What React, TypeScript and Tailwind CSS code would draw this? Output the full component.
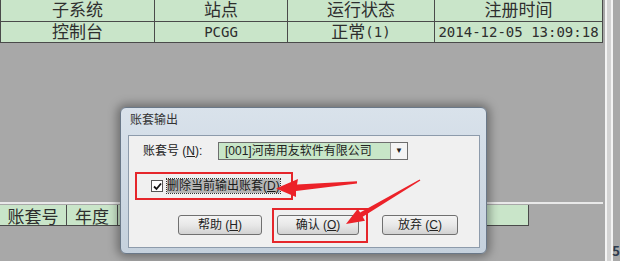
import React from 'react';

const headers = ['子系统', '站点', '运行状态', '注册时间'];

function Cell({ children, h }: { children: React.ReactNode; h: string }) {
  return (
    <div className={`${h} flex items-center justify-center border-b border-r border-[#4a4a4a]`}>
      {children}
    </div>
  );
}

function TopTable() {
  return (
    <div className="grid grid-cols-[154px_133px_147px_168px] border-l border-[#4a4a4a] bg-[#c9e5c9] text-[17px] leading-none text-[#2e2e2e] font-['DejaVu_Sans_Mono','Noto_Sans_CJK_SC',monospace]">
      {headers.map(t => (
        <Cell key={t} h="h-[22px]">{t}</Cell>
      ))}
      <Cell h="h-[21px]">控制台</Cell>
      <Cell h="h-[21px]"><span className="text-[14px]">PCGG</span></Cell>
      <Cell h="h-[21px]">正常<span className="text-[14px]">(1)</span></Cell>
      <Cell h="h-[21px]"><span className="text-[14px]">2014-12-05 13:09:18</span></Cell>
    </div>
  );
}

function Button({ label, hot, className }: { label: string; hot: string; className: string }) {
  return (
    <div
      className={`${className} flex h-[20px] items-center justify-center rounded-[3px] border border-[#707070] bg-gradient-to-b from-[#f4f4f4] via-[#e8e8e8] to-[#d2d2d2] text-[12px] text-[#222]`}
    >
      {label} (<span className="underline">{hot}</span>)
    </div>
  );
}

function Dialog() {
  return (
    <div className="absolute left-[120px] top-[107px] flex h-[147px] w-[367px] flex-col rounded-[6px] border border-[#6a7888] bg-gradient-to-b from-[#d9e2eb] to-[#c5d1dd] shadow-[0_0_10px_3px_rgba(0,0,0,0.35)] font-['Liberation_Sans','Noto_Sans_CJK_SC',sans-serif]">
      <div className="h-[27px] pl-[9px] pt-[4px] text-[12px] leading-[16px] text-[#333]">账套输出</div>
      <div className="mb-[5px] ml-[7px] mr-[6px] flex flex-1 flex-col border border-[#8d9bab] bg-[#f0f0f0] text-[12px] leading-none text-[#222]">
        <div className="mt-[6px] flex h-[18px] items-center pl-[14px]">
          <span className="w-[75px]">
            账套号 (<span className="underline">N</span>):
          </span>
          <div className="flex h-[18px] w-[190px] border border-[#6e6e6e]">
            <div className="flex flex-1 items-center bg-[#c8e6c8] pl-[6px]">[001]河南用友软件有限公司</div>
            <div className="flex w-[17px] items-center justify-center border-l border-[#9a9a9a] bg-[#f4f4f4] text-[8px]">▼</div>
          </div>
        </div>

        <div className="ml-[6px] mt-[12px] flex h-[28px] w-[158px] items-center border-2 border-[#e5262b] pl-[14px]">
          <div className="flex h-[12px] w-[12px] items-center justify-center border border-[#555] bg-white">
            <svg width="9" height="9" viewBox="0 0 9 9">
              <path d="M1 4.5 L3.5 7 L8 1.5" fill="none" stroke="#111" strokeWidth="1.8" />
            </svg>
          </div>
          <span className="ml-[4px] bg-[#b5b5b5] py-[1px] text-[#1a1a1a] outline-1 outline-dotted outline-[#333]">
            删除当前输出账套(<span className="underline">D</span>)
          </span>
        </div>

        <div className="mt-[8px] flex h-[35px] items-start">
          <Button label="帮助" hot="H" className="ml-[49px] mt-[7px] w-[84px]" />
          <div className="ml-[10px] h-[35px] w-[96px] border-2 border-[#e5262b] pl-[3px] pt-[5px]">
            <Button label="确认" hot="O" className="w-[82px] border-[#4d4d4d]" />
          </div>
          <Button label="放弃" hot="C" className="ml-[14px] mt-[7px] w-[76px]" />
        </div>
      </div>
    </div>
  );
}

function Arrows() {
  return (
    <svg className="pointer-events-none absolute left-0 top-0" width="620" height="261" viewBox="0 0 620 261">
      <path d="M357 181.2 L297 184.6 L298 179 L276 188.5 L296 197 L296 191 L357 183.4 Z" fill="#ec2229" />
      <path d="M419.6 179.4 L360.1 212.6 L357.8 208.7 L346 224 L365 220.7 L362.7 216.8 L420.4 180.6 Z" fill="#ec2229" />
    </svg>
  );
}

export default function App() {
  return (
    <div className="relative flex h-[261px] w-[620px] overflow-hidden bg-[#a8a8a8] font-['Noto_Sans_CJK_SC',sans-serif]">
      <div className="flex w-[603px] flex-col">
        <TopTable />
        <div className="h-[159px]" />
        <div className="h-[2px] bg-[#e9e9e9]" />
        <div className="mt-[1px] flex h-[21px] text-[17px] leading-none text-[#2e2e2e]">
          <div className="flex w-[67px] items-center justify-center border-b border-r border-[#4a4a4a] bg-[#c9e5c9]">账套号</div>
          <div className="flex w-[51px] items-center justify-center border-b border-r border-[#4a4a4a] bg-[#c9e5c9]">年度</div>
          <div className="w-[411px] border-b border-r border-[#4a4a4a] bg-[#c9e5c9]" />
        </div>
      </div>
      <div className="ml-[2px] h-full w-[10px] border-x-2 border-[#f3f3f3] bg-[#d3d3d3]" />
      <div className="flex flex-1 flex-col justify-end pb-[4px]">
        <span className="-ml-[1px] text-[13px] font-bold leading-none text-[#2d3a4d]">5</span>
      </div>
      <Dialog />
      <Arrows />
    </div>
  );
}
